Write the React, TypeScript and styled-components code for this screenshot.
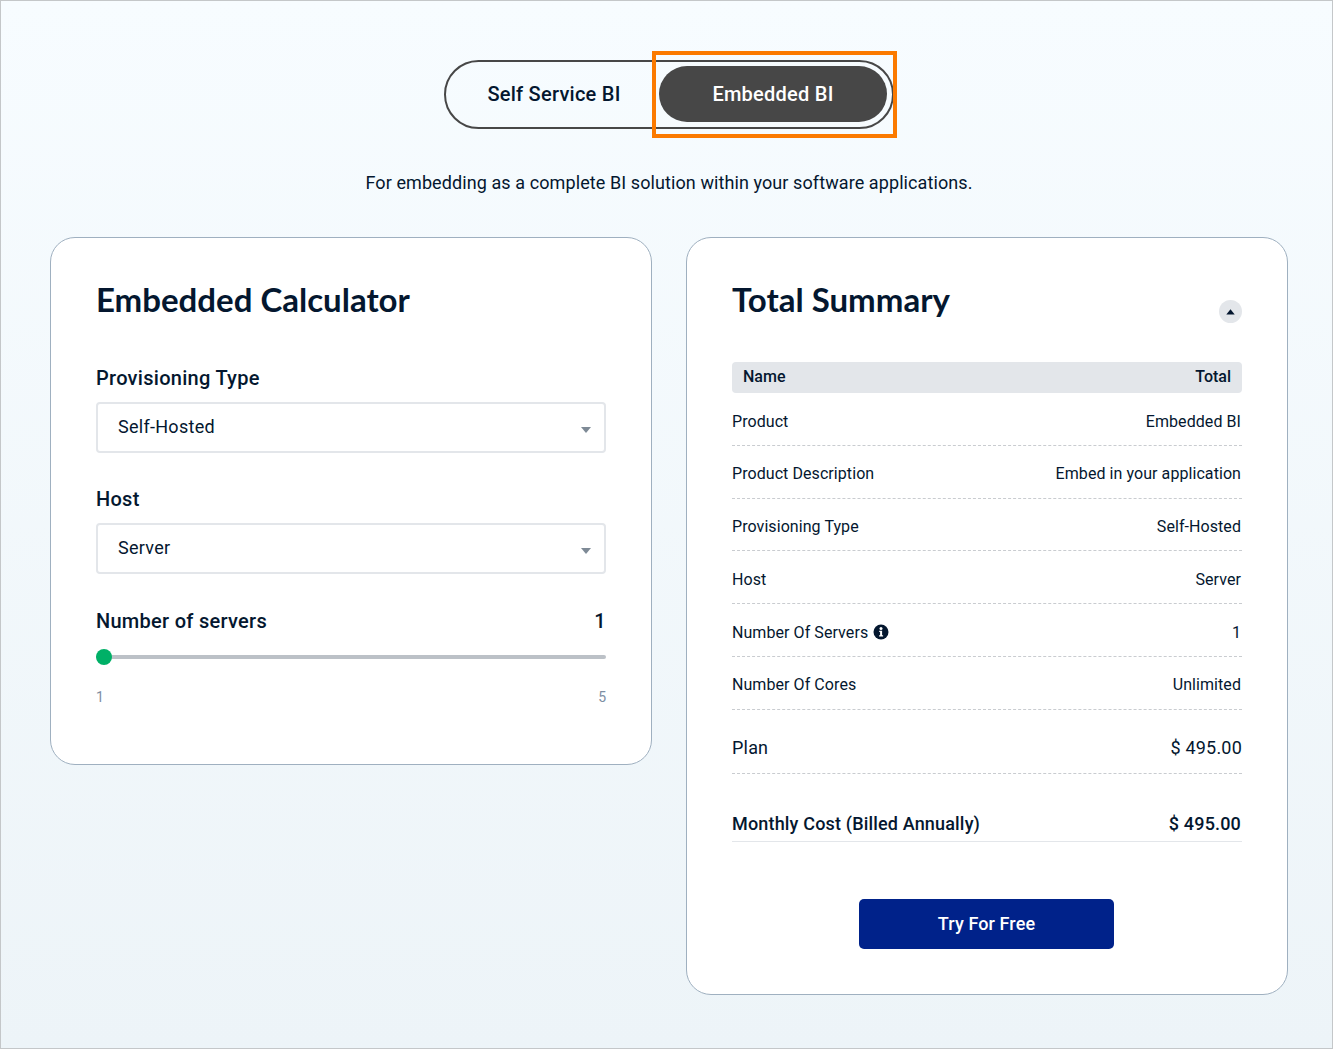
import React from "react";
import styled, { createGlobalStyle } from "styled-components";

const Global = createGlobalStyle`
  html, body { margin: 0; padding: 0; }
  body { font-family: Roboto, "Liberation Sans", sans-serif; color: #04172f; }
  * { box-sizing: border-box; }
`;

const Page = styled.div`
  width: 1333px;
  height: 1049px;
  border: 1px solid #c4c7c9;
  background: linear-gradient(180deg, #f7fcff 0%, #edf4f8 100%);
  padding: 59px 44px 0 49px;
  display: flex;
  flex-direction: column;
  align-items: center;
  overflow: hidden;
`;

const Toggle = styled.div`
  position: relative;
  width: 450px;
  height: 69px;
  border: 2px solid #474747;
  border-radius: 35px;
  padding: 4px 5px 5px 0;
  display: flex;
  justify-content: space-between;
  align-items: stretch;
`;

const ToggleOption = styled.div<{ $active?: boolean }>`
  width: ${(p) => (p.$active ? "228px" : "213px")};
  flex: none;
  padding: ${(p) => (p.$active ? "0 0 1px" : "0 0 1px 3px")};
  border-radius: 28px;
  display: flex;
  align-items: center;
  justify-content: center;
  font-size: 20px;
  font-weight: 500;
  letter-spacing: 0.25px;
  color: ${(p) => (p.$active ? "#ffffff" : "#04172f")};
  background: ${(p) => (p.$active ? "#474747" : "transparent")};
`;

const Highlight = styled.div`
  position: absolute;
  left: 206px;
  top: -11px;
  width: 245px;
  height: 87px;
  border: 4px solid #fb7a00;
  pointer-events: none;
`;

const Subtitle = styled.p`
  margin: 35px 0 0;
  height: 38px;
  font-size: 18px;
  line-height: 38px;
  letter-spacing: 0.09px;
  color: #04172f;
  text-align: center;
`;

const Columns = styled.div`
  width: 100%;
  margin-top: 35px;
  display: flex;
  gap: 34px;
  align-items: flex-start;
`;

const Card = styled.section<{ $h: number }>`
  width: 602px;
  height: ${(p) => p.$h}px;
  background: #ffffff;
  border: 1px solid #9fb0c0;
  border-radius: 25px;
  padding: 40px 45px 0 45px;
`;

const CardHeader = styled.div`
  display: flex;
  justify-content: space-between;
  align-items: flex-start;
`;

const Title = styled.h2`
  margin: 0;
  font-family: Lato, "Noto Sans", sans-serif;
  font-size: 33px;
  line-height: 42px;
  font-weight: 700;
  color: #04172f;
`;

const CollapseButton = styled.div`
  width: 23px;
  height: 23px;
  margin-top: 22px;
  border-radius: 50%;
  background: #e3e6ea;
  display: flex;
  align-items: center;
  justify-content: center;
`;

const Field = styled.div`
  margin-top: 33px;
  &:first-of-type { margin-top: 45px; }
`;

const FieldLabel = styled.div`
  font-size: 20px;
  line-height: 26px;
  font-weight: 500;
  letter-spacing: 0.28px;
  color: #04172f;
`;

const Select = styled.div`
  margin-top: 11px;
  width: 510px;
  height: 51px;
  border: 2px solid #e3e6ea;
  border-radius: 4px;
  padding: 0 20px 2px;
  display: flex;
  align-items: center;
  justify-content: space-between;
  font-size: 18px;
  letter-spacing: 0.28px;
  color: #04172f;
`;

const Caret = styled.span`
  width: 0;
  height: 0;
  margin-right: -7px;
  margin-top: 7px;
  border-left: 5px solid transparent;
  border-right: 5px solid transparent;
  border-top: 6px solid #7e8a96;
`;

const SliderHeader = styled.div`
  margin-top: 34px;
  display: flex;
  justify-content: space-between;
`;

const Track = styled.div`
  position: relative;
  width: 510px;
  height: 4px;
  margin-top: 21px;
  background: #bcc1c7;
  border-radius: 2px;
`;

const Thumb = styled.div`
  position: absolute;
  left: 0;
  top: -6px;
  width: 16px;
  height: 16px;
  border-radius: 50%;
  background: #00b067;
`;

const SliderScale = styled.div`
  margin-top: 30px;
  display: flex;
  justify-content: space-between;
  font-size: 14px;
  line-height: 16px;
  color: #7d8ea3;
`;

const Table = styled.div`
  margin-top: 39px;
`;

const TableHead = styled.div`
  height: 31px;
  padding: 0 11px 3px;
  border-radius: 4px;
  background: #e3e6ea;
  display: flex;
  align-items: center;
  justify-content: space-between;
  font-size: 16px;
  font-weight: 500;
  color: #04172f;
`;

const Row = styled.div<{ $h?: number }>`
  height: ${(p) => p.$h ?? 52.75}px;
  padding: 4.45px 1px 0 0;
  display: flex;
  align-items: center;
  justify-content: space-between;
  border-bottom: 1px dashed #c9ccd0;
  font-size: 16px;
  letter-spacing: 0.07px;
  color: #04172f;
`;

const PlanRow = styled(Row)`
  padding-top: 12px;
  padding-right: 0;
  font-size: 18px;
  letter-spacing: 0.2px;
`;

const TotalRow = styled.div`
  margin-top: 33px;
  height: 35px;
  padding-right: 1px;
  display: flex;
  align-items: center;
  justify-content: space-between;
  border-bottom: 1px solid #e3e6ea;
  font-size: 18px;
  font-weight: 500;
  letter-spacing: 0.17px;
  color: #04172f;
`;

const LabelWithIcon = styled.span`
  display: inline-flex;
  align-items: center;
  gap: 5px;
`;

const ButtonWrap = styled.div`
  margin-top: 57px;
  padding-right: 1px;
  display: flex;
  justify-content: center;
`;

const Cta = styled.button`
  width: 255px;
  height: 50px;
  border: 0;
  border-radius: 5px;
  background: #00228a;
  color: #ffffff;
  font-family: inherit;
  font-size: 18px;
  font-weight: 500;
  letter-spacing: 0.1px;
`;

const rows: [string, string][] = [
  ["Product", "Embedded BI"],
  ["Product Description", "Embed in your application"],
  ["Provisioning Type", "Self-Hosted"],
  ["Host", "Server"],
];

const InfoIcon = () => (
  <svg width="16" height="16" viewBox="0 0 16 16" aria-hidden="true">
    <circle cx="8" cy="8" r="7.5" fill="#04172f" />
    <circle cx="8" cy="4.4" r="1.5" fill="#fff" />
    <path d="M6.2 6.7h2.9v4.6h1v1.3H6.1v-1.3h1V8H6.2z" fill="#fff" />
  </svg>
);

const UpCaret = () => (
  <svg width="9" height="6" viewBox="0 0 9 6" aria-hidden="true">
    <path d="M4.5 0.3L8.7 5.6H0.3z" fill="#04172f" />
  </svg>
);

export default function App() {
  return (
    <Page>
      <Global />
      <Toggle>
        <ToggleOption>Self Service BI</ToggleOption>
        <ToggleOption $active>Embedded BI</ToggleOption>
        <Highlight />
      </Toggle>
      <Subtitle>For embedding as a complete BI solution within your software applications.</Subtitle>
      <Columns>
        <Card $h={528}>
          <Title>Embedded Calculator</Title>
          <Field>
            <FieldLabel>Provisioning Type</FieldLabel>
            <Select>
              Self-Hosted
              <Caret />
            </Select>
          </Field>
          <Field>
            <FieldLabel>Host</FieldLabel>
            <Select>
              Server
              <Caret />
            </Select>
          </Field>
          <SliderHeader>
            <FieldLabel>Number of servers</FieldLabel>
            <FieldLabel>1</FieldLabel>
          </SliderHeader>
          <Track>
            <Thumb />
          </Track>
          <SliderScale>
            <span>1</span>
            <span>5</span>
          </SliderScale>
        </Card>
        <Card $h={758}>
          <CardHeader>
            <Title>Total Summary</Title>
            <CollapseButton>
              <UpCaret />
            </CollapseButton>
          </CardHeader>
          <Table>
            <TableHead>
              <span>Name</span>
              <span>Total</span>
            </TableHead>
            {rows.map(([k, v]) => (
              <Row key={k}>
                <span>{k}</span>
                <span>{v}</span>
              </Row>
            ))}
            <Row>
              <LabelWithIcon>
                Number Of Servers <InfoIcon />
              </LabelWithIcon>
              <span>1</span>
            </Row>
            <Row>
              <span>Number Of Cores</span>
              <span>Unlimited</span>
            </Row>
            <PlanRow $h={64.3}>
              <span>Plan</span>
              <span>$ 495.00</span>
            </PlanRow>
            <TotalRow>
              <span>Monthly Cost (Billed Annually)</span>
              <span>$ 495.00</span>
            </TotalRow>
          </Table>
          <ButtonWrap>
            <Cta>Try For Free</Cta>
          </ButtonWrap>
        </Card>
      </Columns>
    </Page>
  );
}
